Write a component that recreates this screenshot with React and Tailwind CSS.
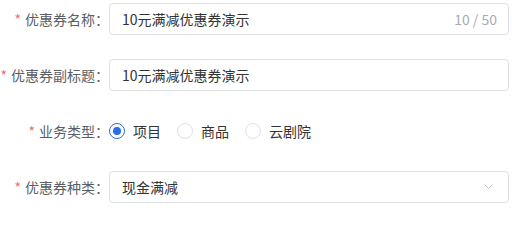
export default function App() {
  const font = { fontFamily: '"Noto Sans CJK SC", "Noto Sans", sans-serif' };

  const Label = ({ children }) => (
    <div className="w-[109px] shrink-0 text-right text-[14px] text-[#5a5e66]">
      <span className="text-[#f56c6c] mr-[4px]">*</span>
      {children}：
    </div>
  );

  const radios = [
    { label: '项目', checked: true },
    { label: '商品', checked: false },
    { label: '云剧院', checked: false },
  ];

  return (
    <div className="w-[512px] h-[206px] bg-white pt-[3px] flex flex-col gap-6" style={font}>
      {/* 名称 */}
      <div className="flex items-center h-8">
        <Label>优惠券名称</Label>
        <div className="w-[400px] h-8 border border-[#dcdfe6] rounded-[4px] flex items-center justify-between pl-3 pr-[11px] text-[14px]">
          <span className="text-[#333]">10元满减优惠券演示</span>
          <span className="text-[#a8abb2]">10 / 50</span>
        </div>
      </div>

      {/* 副标题 */}
      <div className="flex items-center h-8">
        <Label>优惠券副标题</Label>
        <div className="w-[400px] h-8 border border-[#dcdfe6] rounded-[4px] flex items-center pl-3 text-[14px] text-[#333]">
          10元满减优惠券演示
        </div>
      </div>

      {/* 业务类型 */}
      <div className="flex items-center h-8">
        <Label>业务类型</Label>
        <div className="flex items-center gap-4">
          {radios.map((r) => (
            <label key={r.label} className="flex items-center gap-2 text-[14px] text-[#333]">
              <span
                className={`w-[16px] h-[16px] rounded-full border flex items-center justify-center ${
                  r.checked ? 'border-[#2b6fe6]' : 'border-[#dcdfe6]'
                }`}
              >
                {r.checked && <span className="w-[8px] h-[8px] rounded-full bg-[#2b6fe6]" />}
              </span>
              {r.label}
            </label>
          ))}
        </div>
      </div>

      {/* 种类 */}
      <div className="flex items-center h-8">
        <Label>优惠券种类</Label>
        <div className="w-[400px] h-8 border border-[#dcdfe6] rounded-[4px] flex items-center justify-between pl-3 pr-[15px] text-[14px] text-[#333]">
          <span>现金满减</span>
          <svg width="9" height="5" viewBox="0 0 9 5" fill="none" className="-mt-[1px]">
            <path d="M0.5 0.5l4 4 4-4" stroke="#c0c4cc" strokeWidth="1" />
          </svg>
        </div>
      </div>
    </div>
  );
}
